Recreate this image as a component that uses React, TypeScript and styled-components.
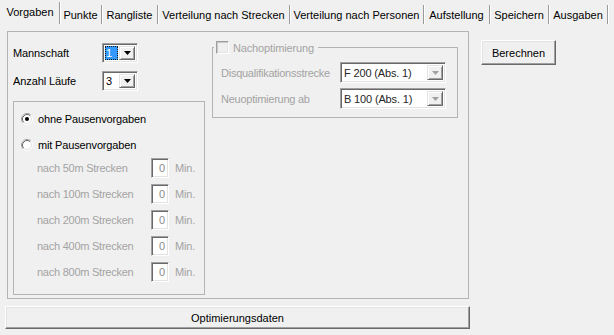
import React from "react";
import styled, { createGlobalStyle } from "styled-components";

const Global = createGlobalStyle`
  html, body { margin: 0; padding: 0; background: #f0f0f0; }
  * { box-sizing: border-box; }
`;

const Window = styled.div`
  width: 614px;
  height: 335px;
  background: #f0f0f0;
  font-family: "Liberation Sans", Arial, sans-serif;
  font-size: 11px;
  letter-spacing: -0.15px;
  color: #000;
  overflow: hidden;
  display: flex;
  flex-direction: column;
`;

const TabStrip = styled.div`
  display: flex;
  height: 25px;
  padding: 2px 0 0 1px;
`;

const Tab = styled.div<{ $w: number; $active?: boolean }>`
  width: ${(p) => p.$w}px;
  height: ${(p) => (p.$active ? 22 : 19)}px;
  margin-top: ${(p) => (p.$active ? 0 : 3)}px;
  padding-bottom: ${(p) => (p.$active ? 2 : 0)}px;
  display: flex;
  align-items: center;
  justify-content: center;
  white-space: nowrap;
  border-right: 1px solid #9a9a9a;
  box-shadow: 1px 0 0 #ffffff;
  font-size: 11px;
  letter-spacing: 0;
  color: #000;
`;

const Body = styled.div`
  display: flex;
  align-items: flex-start;
  padding: 6px 0 0 7px;
`;

const MainFrame = styled.div`
  width: 462px;
  height: 268px;
  border: 1px solid #b4b4b4;
  display: flex;
  gap: 7px;
  padding-left: 5px;
`;

const LeftCol = styled.div`
  width: 192px;
  padding-top: 11px;
  display: flex;
  flex-direction: column;
`;

const RightCol = styled.div`
  padding-top: 9px;
`;

const FieldRow = styled.div<{ $mt?: number }>`
  display: flex;
  align-items: center;
  height: 20px;
  margin-top: ${(p) => p.$mt ?? 0}px;
`;

const Label = styled.span<{ $w: number; $disabled?: boolean }>`
  width: ${(p) => p.$w}px;
  flex: none;
  white-space: nowrap;
  color: ${(p) => (p.$disabled ? "#a3a3a3" : "#000")};
  letter-spacing: ${(p) => (p.$disabled ? "-0.25px" : "-0.1px")};
`;

const Combo = styled.div<{ $w: number; $h: number }>`
  width: ${(p) => p.$w}px;
  height: ${(p) => p.$h}px;
  flex: none;
  display: flex;
  background: #fff;
  border: 1px solid;
  border-color: #a0a0a0 #ffffff #ffffff #a0a0a0;
  box-shadow: inset 1px 1px 0 #696969, inset -1px -1px 0 #e3e3e3;
  padding: 2px;
`;

const ComboText = styled.div<{ $selected?: boolean; $disabled?: boolean }>`
  flex: 1;
  display: flex;
  align-items: center;
  padding-left: 1px;
  white-space: nowrap;
  overflow: hidden;
  color: ${(p) => (p.$selected ? "#fff" : p.$disabled ? "#262626" : "#000")};
  background: ${(p) => (p.$selected ? "#3399ff" : "transparent")};
  outline: ${(p) => (p.$selected ? "1px dotted #1a1a1a" : "none")};
  outline-offset: -1px;
  margin-right: ${(p) => (p.$selected ? 1 : 0)}px;
`;

const DropButton = styled.div<{ $disabled?: boolean }>`
  width: 16px;
  flex: none;
  display: flex;
  align-items: center;
  justify-content: center;
  background: #f0f0f0;
  border: 1px solid;
  border-color: #e3e3e3 #696969 #696969 #e3e3e3;
  box-shadow: inset 1px 1px 0 #ffffff, inset -1px -1px 0 #a0a0a0;
  color: ${(p) => (p.$disabled ? "#a0a0a0" : "#000")};
`;

const PauseBox = styled.div`
  width: 192px;
  height: 194px;
  margin-top: 10px;
  border: 1px solid #b4b4b4;
  padding: 9px 0 0 7px;
  display: flex;
  flex-direction: column;
`;

const RadioRow = styled.label<{ $mt?: number }>`
  display: flex;
  align-items: center;
  gap: 5px;
  height: 16px;
  margin-top: ${(p) => p.$mt ?? 0}px;
`;

const PauseRow = styled.div<{ $mt: number }>`
  display: flex;
  align-items: center;
  height: 20px;
  margin-top: ${(p) => p.$mt}px;
  padding-left: 16px;
`;

const NumBox = styled.div`
  width: 18px;
  height: 20px;
  flex: none;
  background: #fff;
  border: 1px solid;
  border-color: #a0a0a0 #ffffff #ffffff #a0a0a0;
  box-shadow: inset 1px 1px 0 #696969, inset -1px -1px 0 #e3e3e3;
  display: flex;
  align-items: center;
  justify-content: flex-end;
  padding-right: 3px;
  color: #8a8a8a;
`;

const Unit = styled.span`
  margin-left: 6px;
  color: #a3a3a3;
`;

const Group = styled.fieldset`
  width: 246px;
  margin: 0;
  padding: 0 0 8px 8px;
  border: 1px solid #b4b4b4;
  min-inline-size: 0;
`;

const Legend = styled.legend`
  display: flex;
  align-items: center;
  gap: 4px;
  margin-left: -7px;
  padding: 0 4px 0 2px;
  height: 13px;
  color: #a3a3a3;
`;

const CheckBox = styled.span`
  width: 13px;
  height: 13px;
  flex: none;
  background: #f0f0f0;
  border: 1px solid;
  border-color: #a0a0a0 #ffffff #ffffff #a0a0a0;
  box-shadow: inset 1px 1px 0 #c8c8c8, inset -1px -1px 0 #e3e3e3;
`;

const GroupRow = styled.div<{ $mt: number }>`
  display: flex;
  align-items: center;
  height: 21px;
  margin-top: ${(p) => p.$mt}px;
`;

const Button = styled.button<{ $w: number; $h: number }>`
  width: ${(p) => p.$w}px;
  height: ${(p) => p.$h}px;
  flex: none;
  background: #f0f0f0;
  border: 1px solid;
  border-color: #ffffff #696969 #696969 #ffffff;
  box-shadow: inset -1px -1px 0 #a0a0a0, inset 1px 1px 0 #e3e3e3;
  font-family: "Liberation Sans", Arial, sans-serif;
  font-size: 11px;
  color: #000;
  padding: 0;
`;

const SideButton = styled(Button)`
  margin: 9px 0 0 12px;
`;

const WideButton = styled(Button)`
  margin: 7px 0 0 5px;
`;

const Arrow = () => (
  <svg width="7" height="4" viewBox="0 0 7 4">
    <polygon points="0,0 7,0 3.5,4" fill="currentColor" />
  </svg>
);

const Radio = ({ checked }: { checked?: boolean }) => (
  <svg width="12" height="12" viewBox="0 0 12 12">
    <circle cx="6" cy="6" r="5" fill="#fff" />
    <path d="M2.11 9.89 A5.5 5.5 0 0 1 9.89 2.11" stroke="#a0a0a0" fill="none" />
    <path d="M9.89 2.11 A5.5 5.5 0 0 1 2.11 9.89" stroke="#ffffff" fill="none" />
    <path d="M2.82 9.18 A4.5 4.5 0 0 1 9.18 2.82" stroke="#696969" fill="none" />
    <path d="M9.18 2.82 A4.5 4.5 0 0 1 2.82 9.18" stroke="#e3e3e3" fill="none" />
    {checked && <circle cx="6" cy="6" r="2" fill="#000" />}
  </svg>
);

const tabs: [string, number][] = [
  ["Vorgaben", 59],
  ["Punkte", 42],
  ["Rangliste", 56],
  ["Verteilung nach Strecken", 132],
  ["Verteilung nach Personen", 134],
  ["Aufstellung", 66],
  ["Speichern", 59],
  ["Ausgaben", 59],
];

const distances = ["50m", "100m", "200m", "400m", "800m"];

export default function App() {
  return (
    <Window>
      <Global />
      <TabStrip>
        {tabs.map(([t, w], i) => (
          <Tab key={t} $w={w} $active={i === 0}>
            {t}
          </Tab>
        ))}
      </TabStrip>
      <Body>
        <MainFrame>
          <LeftCol>
            <FieldRow>
              <Label $w={89}>Mannschaft</Label>
              <Combo $w={36} $h={20}>
                <ComboText $selected>1</ComboText>
                <DropButton>
                  <Arrow />
                </DropButton>
              </Combo>
            </FieldRow>
            <FieldRow $mt={8}>
              <Label $w={89}>Anzahl Läufe</Label>
              <Combo $w={36} $h={20}>
                <ComboText>3</ComboText>
                <DropButton>
                  <Arrow />
                </DropButton>
              </Combo>
            </FieldRow>
            <PauseBox>
              <RadioRow>
                <Radio checked />
                <span>ohne Pausenvorgaben</span>
              </RadioRow>
              <RadioRow $mt={10}>
                <Radio />
                <span>mit Pausenvorgaben</span>
              </RadioRow>
              {distances.map((d, i) => (
                <PauseRow key={d} $mt={i === 0 ? 5 : 6}>
                  <Label $w={114} $disabled>
                    nach {d} Strecken
                  </Label>
                  <NumBox>0</NumBox>
                  <Unit>Min.</Unit>
                </PauseRow>
              ))}
            </PauseBox>
          </LeftCol>
          <RightCol>
            <Group>
              <Legend>
                <CheckBox />
                <span>Nachoptimierung</span>
              </Legend>
              <GroupRow $mt={8}>
                <Label $w={119} $disabled>
                  Disqualifikationsstrecke
                </Label>
                <Combo $w={106} $h={21}>
                  <ComboText $disabled>F 200 (Abs. 1)</ComboText>
                  <DropButton $disabled>
                    <Arrow />
                  </DropButton>
                </Combo>
              </GroupRow>
              <GroupRow $mt={5}>
                <Label $w={119} $disabled>
                  Neuoptimierung ab
                </Label>
                <Combo $w={106} $h={21}>
                  <ComboText $disabled>B 100 (Abs. 1)</ComboText>
                  <DropButton $disabled>
                    <Arrow />
                  </DropButton>
                </Combo>
              </GroupRow>
            </Group>
          </RightCol>
        </MainFrame>
        <SideButton $w={75} $h={25}>Berechnen</SideButton>
      </Body>
      <WideButton $w={465} $h={23}>Optimierungsdaten</WideButton>
    </Window>
  );
}
